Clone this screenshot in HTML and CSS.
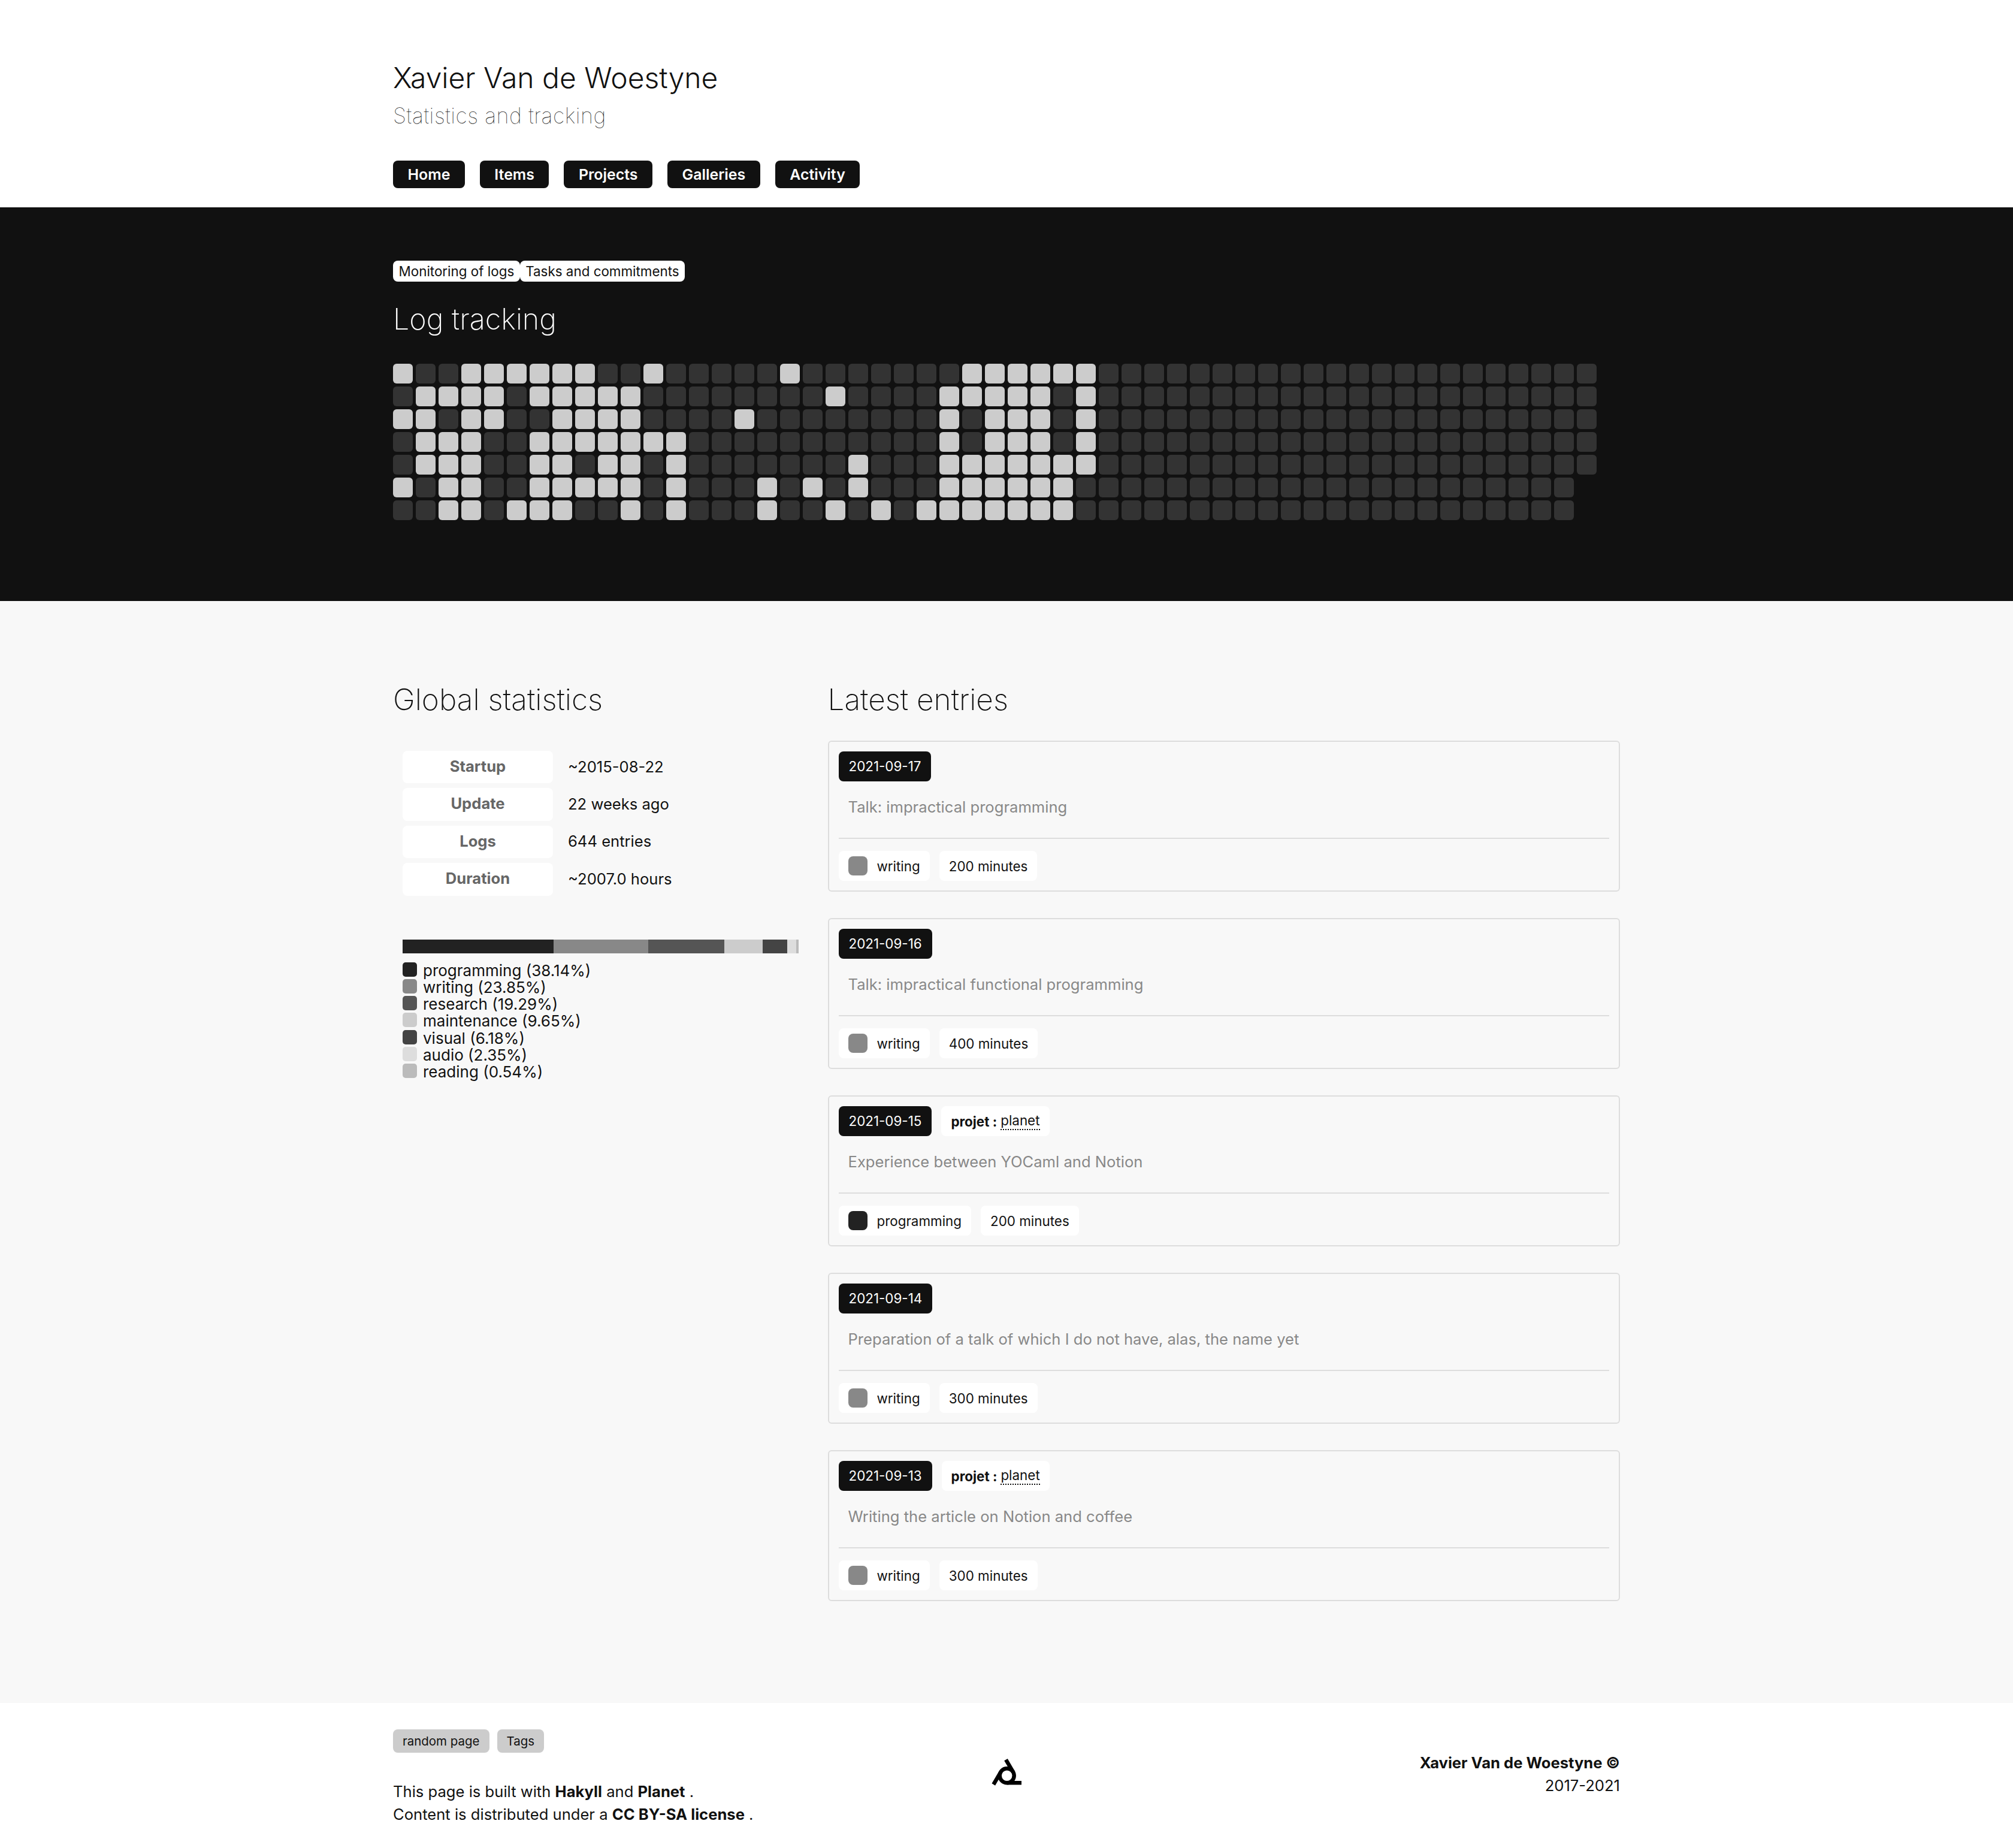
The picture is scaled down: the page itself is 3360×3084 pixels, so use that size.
FILE: index.html
```html
<!DOCTYPE html>
<html lang="en">
<head>
<meta charset="utf-8">
<title>Statistics and tracking</title>
<link rel="stylesheet" href="styles.css">
</head>
<body>
<header class="site-header">
  <div class="wrap">
    <h1 class="site-title">Xavier Van de Woestyne</h1>
    <p class="site-subtitle">Statistics and tracking</p>
    <nav class="site-nav">
      <a class="nav-link">Home</a>
      <a class="nav-link">Items</a>
      <a class="nav-link">Projects</a>
      <a class="nav-link">Galleries</a>
      <a class="nav-link">Activity</a>
    </nav>
  </div>
</header>

<section class="band">
  <div class="wrap">
    <div class="tabs"><a class="tab">Monitoring of logs</a><a class="tab">Tasks and commitments</a></div>
    <h2 class="band-title">Log tracking</h2>
    <div class="heatmap">
      <div class="heat-row"><i class="on"></i><i></i><i></i><i class="on"></i><i class="on"></i><i class="on"></i><i class="on"></i><i class="on"></i><i class="on"></i><i></i><i></i><i class="on"></i><i></i><i></i><i></i><i></i><i></i><i class="on"></i><i></i><i></i><i></i><i></i><i></i><i></i><i></i><i class="on"></i><i class="on"></i><i class="on"></i><i class="on"></i><i class="on"></i><i class="on"></i><i></i><i></i><i></i><i></i><i></i><i></i><i></i><i></i><i></i><i></i><i></i><i></i><i></i><i></i><i></i><i></i><i></i><i></i><i></i><i></i><i></i><i></i></div>
      <div class="heat-row"><i></i><i class="on"></i><i class="on"></i><i class="on"></i><i class="on"></i><i></i><i class="on"></i><i class="on"></i><i class="on"></i><i class="on"></i><i class="on"></i><i></i><i></i><i></i><i></i><i></i><i></i><i></i><i></i><i class="on"></i><i></i><i></i><i></i><i></i><i class="on"></i><i class="on"></i><i class="on"></i><i class="on"></i><i class="on"></i><i></i><i class="on"></i><i></i><i></i><i></i><i></i><i></i><i></i><i></i><i></i><i></i><i></i><i></i><i></i><i></i><i></i><i></i><i></i><i></i><i></i><i></i><i></i><i></i><i></i></div>
      <div class="heat-row"><i class="on"></i><i class="on"></i><i></i><i class="on"></i><i class="on"></i><i></i><i></i><i class="on"></i><i class="on"></i><i class="on"></i><i class="on"></i><i></i><i></i><i></i><i></i><i class="on"></i><i></i><i></i><i></i><i></i><i></i><i></i><i></i><i></i><i class="on"></i><i></i><i class="on"></i><i class="on"></i><i class="on"></i><i></i><i class="on"></i><i></i><i></i><i></i><i></i><i></i><i></i><i></i><i></i><i></i><i></i><i></i><i></i><i></i><i></i><i></i><i></i><i></i><i></i><i></i><i></i><i></i><i></i></div>
      <div class="heat-row"><i></i><i class="on"></i><i class="on"></i><i class="on"></i><i></i><i></i><i class="on"></i><i class="on"></i><i class="on"></i><i class="on"></i><i class="on"></i><i class="on"></i><i class="on"></i><i></i><i></i><i></i><i></i><i></i><i></i><i></i><i></i><i></i><i></i><i></i><i class="on"></i><i></i><i class="on"></i><i class="on"></i><i class="on"></i><i></i><i class="on"></i><i></i><i></i><i></i><i></i><i></i><i></i><i></i><i></i><i></i><i></i><i></i><i></i><i></i><i></i><i></i><i></i><i></i><i></i><i></i><i></i><i></i><i></i></div>
      <div class="heat-row"><i></i><i class="on"></i><i class="on"></i><i class="on"></i><i></i><i></i><i class="on"></i><i class="on"></i><i></i><i class="on"></i><i class="on"></i><i></i><i class="on"></i><i></i><i></i><i></i><i></i><i></i><i></i><i></i><i class="on"></i><i></i><i></i><i></i><i class="on"></i><i class="on"></i><i class="on"></i><i class="on"></i><i class="on"></i><i class="on"></i><i class="on"></i><i></i><i></i><i></i><i></i><i></i><i></i><i></i><i></i><i></i><i></i><i></i><i></i><i></i><i></i><i></i><i></i><i></i><i></i><i></i><i></i><i></i><i></i></div>
      <div class="heat-row"><i class="on"></i><i></i><i class="on"></i><i class="on"></i><i></i><i></i><i class="on"></i><i class="on"></i><i class="on"></i><i class="on"></i><i class="on"></i><i></i><i class="on"></i><i></i><i></i><i></i><i class="on"></i><i></i><i class="on"></i><i></i><i class="on"></i><i></i><i></i><i></i><i class="on"></i><i class="on"></i><i class="on"></i><i class="on"></i><i class="on"></i><i class="on"></i><i></i><i></i><i></i><i></i><i></i><i></i><i></i><i></i><i></i><i></i><i></i><i></i><i></i><i></i><i></i><i></i><i></i><i></i><i></i><i></i><i></i><i></i></div>
      <div class="heat-row"><i></i><i></i><i class="on"></i><i class="on"></i><i></i><i class="on"></i><i class="on"></i><i class="on"></i><i></i><i></i><i class="on"></i><i></i><i class="on"></i><i></i><i></i><i></i><i class="on"></i><i></i><i></i><i class="on"></i><i></i><i class="on"></i><i></i><i class="on"></i><i class="on"></i><i class="on"></i><i class="on"></i><i class="on"></i><i class="on"></i><i class="on"></i><i></i><i></i><i></i><i></i><i></i><i></i><i></i><i></i><i></i><i></i><i></i><i></i><i></i><i></i><i></i><i></i><i></i><i></i><i></i><i></i><i></i><i></i></div>
    </div>
  </div>
</section>

<main class="main">
  <div class="wrap columns">
    <aside class="stats">
      <h2 class="section-title">Global statistics</h2>
      <dl class="facts">
        <div class="fact"><dt class="fact-key">Startup</dt><dd class="fact-value">~2015-08-22</dd></div>
        <div class="fact"><dt class="fact-key">Update</dt><dd class="fact-value">22 weeks ago</dd></div>
        <div class="fact"><dt class="fact-key">Logs</dt><dd class="fact-value">644 entries</dd></div>
        <div class="fact"><dt class="fact-key">Duration</dt><dd class="fact-value">~2007.0 hours</dd></div>
      </dl>
      <div class="bar">
        <span class="seg c-programming" style="width:38.14%"></span>
        <span class="seg c-writing" style="width:23.85%"></span>
        <span class="seg c-research" style="width:19.29%"></span>
        <span class="seg c-maintenance" style="width:9.65%"></span>
        <span class="seg c-visual" style="width:6.18%"></span>
        <span class="seg c-audio" style="width:2.35%"></span>
        <span class="seg c-reading" style="width:0.54%"></span>
      </div>
      <ul class="legend">
        <li class="legend-item"><span class="legend-dot c-programming"></span>programming (38.14%)</li>
        <li class="legend-item"><span class="legend-dot c-writing"></span>writing (23.85%)</li>
        <li class="legend-item"><span class="legend-dot c-research"></span>research (19.29%)</li>
        <li class="legend-item"><span class="legend-dot c-maintenance"></span>maintenance (9.65%)</li>
        <li class="legend-item"><span class="legend-dot c-visual"></span>visual (6.18%)</li>
        <li class="legend-item"><span class="legend-dot c-audio"></span>audio (2.35%)</li>
        <li class="legend-item"><span class="legend-dot c-reading"></span>reading (0.54%)</li>
      </ul>
    </aside>

    <section class="entries">
      <h2 class="section-title">Latest entries</h2>
      <div class="entry-list">
        <article class="entry">
          <div class="entry-head"><span class="date">2021-09-17</span></div>
          <p class="entry-text">Talk: impractical programming</p>
          <div class="entry-foot">
            <span class="chip"><span class="chip-dot c-writing"></span>writing</span>
            <span class="chip">200 minutes</span>
          </div>
        </article>
        <article class="entry">
          <div class="entry-head"><span class="date">2021-09-16</span></div>
          <p class="entry-text">Talk: impractical functional programming</p>
          <div class="entry-foot">
            <span class="chip"><span class="chip-dot c-writing"></span>writing</span>
            <span class="chip">400 minutes</span>
          </div>
        </article>
        <article class="entry">
          <div class="entry-head"><span class="date">2021-09-15</span><span class="chip"><strong class="chip-label">projet :</strong><a class="chip-link">planet</a></span></div>
          <p class="entry-text">Experience between YOCaml and Notion</p>
          <div class="entry-foot">
            <span class="chip"><span class="chip-dot c-programming"></span>programming</span>
            <span class="chip">200 minutes</span>
          </div>
        </article>
        <article class="entry">
          <div class="entry-head"><span class="date">2021-09-14</span></div>
          <p class="entry-text">Preparation of a talk of which I do not have, alas, the name yet</p>
          <div class="entry-foot">
            <span class="chip"><span class="chip-dot c-writing"></span>writing</span>
            <span class="chip">300 minutes</span>
          </div>
        </article>
        <article class="entry">
          <div class="entry-head"><span class="date">2021-09-13</span><span class="chip"><strong class="chip-label">projet :</strong><a class="chip-link">planet</a></span></div>
          <p class="entry-text">Writing the article on Notion and coffee</p>
          <div class="entry-foot">
            <span class="chip"><span class="chip-dot c-writing"></span>writing</span>
            <span class="chip">300 minutes</span>
          </div>
        </article>
      </div>
    </section>
  </div>
</main>

<footer class="site-footer">
  <div class="wrap footer-grid">
    <div class="footer-left">
      <div class="footer-buttons"><a class="footer-button">random page</a><a class="footer-button">Tags</a></div>
      <p class="footer-text">This page is built with <strong>Hakyll</strong> and <strong>Planet</strong> .<br>Content is distributed under a <strong>CC BY-SA license</strong> .</p>
    </div>
    <svg class="logo" viewBox="0 0 50 45" width="50" height="45" aria-hidden="true">
      <circle cx="25.7" cy="28.3" r="12" fill="none" stroke="#000" stroke-width="6.5"/>
      <path d="M24 1.7 L36 22.2 M3.3 43 L14.9 23.1 M25.7 40.3 L50 40.3" fill="none" stroke="#000" stroke-width="6.5"/>
    </svg>
    <div class="footer-right">
      <strong>Xavier Van de Woestyne ©</strong><br>2017-2021
    </div>
  </div>
</footer>
</body>
</html>
```

FILE: styles.css
```css
* { box-sizing: border-box; }
html, body { margin: 0; padding: 0; }
body {
  font-family: Inter, "Liberation Sans", sans-serif;
  color: #111;
  background: #fff;
  font-size: 25.6px;
}
.wrap { width: 2048px; margin: 0 auto; }

.site-header { height: 346px; padding-top: 100px; background: #fff; }
.site-title { margin: 0; font-size: 48px; line-height: 60px; font-weight: 300; }
.site-subtitle { margin: 9px 0 0; font-size: 36px; line-height: 48px; font-weight: 100; letter-spacing: 0.5px; color: #222; }
.site-nav { display: flex; gap: 25px; margin-top: 51px; }
.nav-link {
  display: block; height: 46px; padding: 0 24.5px; line-height: 46px;
  background: #111; color: #fff; border-radius: 8px;
  font-size: 24.9px; font-weight: 600;
}

.band { height: 657px; padding-top: 89px; background: #111; color: #fff; }
.tabs { display: flex; }
.tab {
  display: block; height: 35px; padding: 0 9.5px; line-height: 35px;
  background: #fff; color: #111; border-radius: 8px; font-size: 22.4px;
}
.band-title { margin: 33px 0 0; font-size: 48.5px; line-height: 60px; font-weight: 200; }
.heatmap { display: flex; flex-direction: column; gap: 5px; margin-top: 44px; }
.heat-row { display: flex; gap: 5px; }
.heat-row i { display: block; width: 33px; height: 33px; background: #333; border-radius: 6px; }
.heat-row i.on { background: #ccc; }

.main { padding: 134px 0 170px; background: #f8f8f8; }
.columns { display: flex; }
.stats { width: 725.5px; }
.entries { width: 1322.5px; }
.section-title { margin: 0; font-size: 49.6px; line-height: 60px; font-weight: 200; }

.facts { margin: 56px 0 0 16px; display: flex; flex-direction: column; gap: 8px; }
.fact { display: flex; align-items: center; height: 54.4px; gap: 25px; }
.fact-key {
  width: 251px; height: 100%; line-height: 52px; text-align: center;
  background: #fff; border-radius: 8px; color: #666; font-weight: 700;
}
.fact-value { margin: -2px 0 0; color: #111; }

.bar { display: flex; width: 661px; height: 23px; margin: 73px 0 0 16px; }
.seg { display: block; height: 100%; }
.legend { list-style: none; margin: 15px 0 0 16px; padding: 0; font-size: 26px; }
.legend-item { display: flex; height: 28.3px; line-height: 28px; white-space: nowrap; }
.legend-dot { width: 24px; height: 24px; border-radius: 5px; margin-right: 10px; flex: none; }

.c-programming { background: #222; }
.c-writing { background: #888; }
.c-research { background: #555; }
.c-maintenance { background: #ccc; }
.c-visual { background: #444; }
.c-audio { background: #ddd; }
.c-reading { background: #bbb; }

.entry-list { display: flex; flex-direction: column; gap: 44px; margin-top: 39px; }
.entry {
  height: 252px; padding: 16px 16px 16px; background: #f8f8f8;
  border: 2px solid #ddd; border-radius: 6px;
}
.entry-head { display: flex; gap: 16px; height: 50px; }
.date {
  display: block; height: 50px; padding: 0 17px; line-height: 50px;
  background: #111; color: #fff; border-radius: 8px; font-size: 22.4px;
}
.chip {
  display: flex; align-items: center; height: 50px; padding: 0 16px;
  background: #fff; border-radius: 8px; font-size: 22.4px; color: #111;
}
.chip-dot { width: 32px; height: 32px; border-radius: 8px; margin-right: 16px; }
.chip-label { font-weight: 700; margin-right: 6px; }
.chip-link { border-bottom: 2px dotted #111; line-height: 28px; }
.entry-text {
  margin: 0; padding: 25px 16px 33px; font-size: 25.6px; line-height: 36px; color: #888;
  border-bottom: 2px solid #ddd; height: 96px;
}
.entry-foot { display: flex; gap: 16px; margin-top: 20px; }

.site-footer { height: 242px; padding-top: 44px; background: #fff; }
.footer-grid { display: grid; grid-template-columns: 1fr auto 1fr; align-items: start; }
.footer-buttons { display: flex; gap: 13px; }
.footer-button {
  display: block; height: 39px; padding: 0 16px; line-height: 39px;
  background: #ccc; border-radius: 8px; font-size: 20.48px; color: #111;
}
.footer-text { margin: 46px 0 0; line-height: 38px; }
.footer-right { margin-top: 37px; text-align: right; line-height: 38px; }
.logo { display: block; margin: 49px 0 0 -1px; }
```
